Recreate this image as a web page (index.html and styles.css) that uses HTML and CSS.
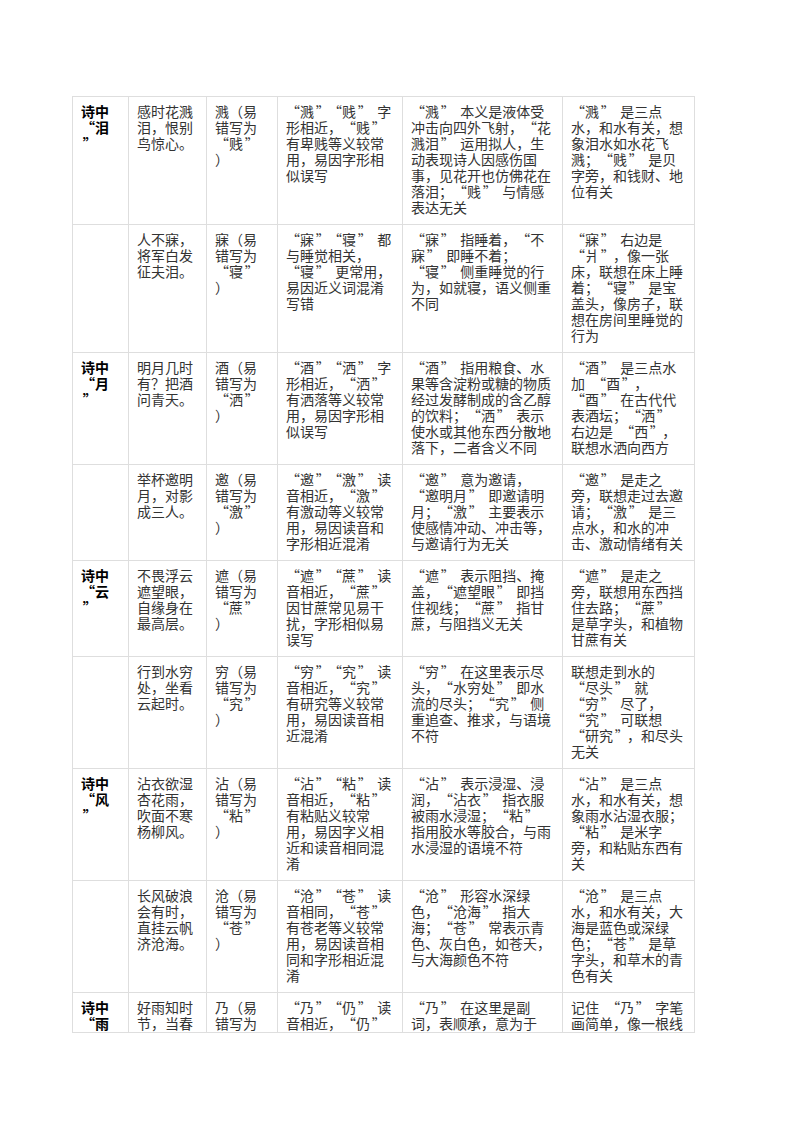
FILE: index.html
```html
<!DOCTYPE html>
<html lang="zh-CN">
<head>
<meta charset="utf-8">
<title>诗词易错字</title>
<link rel="stylesheet" href="styles.css">
</head>
<body>
<div class="page">
<table class="tbl">
<colgroup>
<col class="c1"><col class="c2"><col class="c3"><col class="c4"><col class="c5"><col class="c6">
</colgroup>
<tbody>
<tr>
<td class="key">诗中<br><i class="l">“</i>泪<br><i class="r">”</i></td>
<td>感时花溅<br>泪，恨别<br>鸟惊心。</td>
<td>溅（易<br>错写为<br><i class="l">“</i>贱<i class="r">”</i><br>）</td>
<td><i class="l">“</i>溅<i class="r">”</i><i class="l">“</i>贱<i class="r">”</i> 字<br>形相近，<i class="l">“</i>贱<i class="r">”</i><br>有卑贱等义较常<br>用，易因字形相<br>似误写</td>
<td><i class="l">“</i>溅<i class="r">”</i> 本义是液体受<br>冲击向四外飞射，<i class="l">“</i>花<br>溅泪<i class="r">”</i> 运用拟人，生<br>动表现诗人因感伤国<br>事，见花开也仿佛花在<br>落泪；<i class="l">“</i>贱<i class="r">”</i> 与情感<br>表达无关</td>
<td><i class="l">“</i>溅<i class="r">”</i> 是三点<br>水，和水有关，想<br>象泪水如水花飞<br>溅；<i class="l">“</i>贱<i class="r">”</i> 是贝<br>字旁，和钱财、地<br>位有关</td>
</tr>
<tr>
<td class="key"></td>
<td>人不寐，<br>将军白发<br>征夫泪。</td>
<td>寐（易<br>错写为<br><i class="l">“</i>寝<i class="r">”</i><br>）</td>
<td><i class="l">“</i>寐<i class="r">”</i><i class="l">“</i>寝<i class="r">”</i> 都<br>与睡觉相关，<br><i class="l">“</i>寝<i class="r">”</i> 更常用，<br>易因近义词混淆<br>写错</td>
<td><i class="l">“</i>寐<i class="r">”</i> 指睡着，<i class="l">“</i>不<br>寐<i class="r">”</i> 即睡不着；<br><i class="l">“</i>寝<i class="r">”</i> 侧重睡觉的行<br>为，如就寝，语义侧重<br>不同</td>
<td><i class="l">“</i>寐<i class="r">”</i> 右边是<br><i class="l">“</i>爿<i class="r">”</i>，像一张<br>床，联想在床上睡<br>着；<i class="l">“</i>寝<i class="r">”</i> 是宝<br>盖头，像房子，联<br>想在房间里睡觉的<br>行为</td>
</tr>
<tr>
<td class="key">诗中<br><i class="l">“</i>月<br><i class="r">”</i></td>
<td>明月几时<br>有？把酒<br>问青天。</td>
<td>酒（易<br>错写为<br><i class="l">“</i>洒<i class="r">”</i><br>）</td>
<td><i class="l">“</i>酒<i class="r">”</i><i class="l">“</i>洒<i class="r">”</i> 字<br>形相近，<i class="l">“</i>洒<i class="r">”</i><br>有洒落等义较常<br>用，易因字形相<br>似误写</td>
<td><i class="l">“</i>酒<i class="r">”</i> 指用粮食、水<br>果等含淀粉或糖的物质<br>经过发酵制成的含乙醇<br>的饮料；<i class="l">“</i>洒<i class="r">”</i> 表示<br>使水或其他东西分散地<br>落下，二者含义不同</td>
<td><i class="l">“</i>酒<i class="r">”</i> 是三点水<br>加 <i class="l">“</i>酉<i class="r">”</i>，<br><i class="l">“</i>酉<i class="r">”</i> 在古代代<br>表酒坛；<i class="l">“</i>洒<i class="r">”</i><br>右边是 <i class="l">“</i>西<i class="r">”</i>，<br>联想水洒向西方</td>
</tr>
<tr>
<td class="key"></td>
<td>举杯邀明<br>月，对影<br>成三人。</td>
<td>邀（易<br>错写为<br><i class="l">“</i>激<i class="r">”</i><br>）</td>
<td><i class="l">“</i>邀<i class="r">”</i><i class="l">“</i>激<i class="r">”</i> 读<br>音相近，<i class="l">“</i>激<i class="r">”</i><br>有激动等义较常<br>用，易因读音和<br>字形相近混淆</td>
<td><i class="l">“</i>邀<i class="r">”</i> 意为邀请，<br><i class="l">“</i>邀明月<i class="r">”</i> 即邀请明<br>月；<i class="l">“</i>激<i class="r">”</i> 主要表示<br>使感情冲动、冲击等，<br>与邀请行为无关</td>
<td><i class="l">“</i>邀<i class="r">”</i> 是走之<br>旁，联想走过去邀<br>请；<i class="l">“</i>激<i class="r">”</i> 是三<br>点水，和水的冲<br>击、激动情绪有关</td>
</tr>
<tr>
<td class="key">诗中<br><i class="l">“</i>云<br><i class="r">”</i></td>
<td>不畏浮云<br>遮望眼，<br>自缘身在<br>最高层。</td>
<td>遮（易<br>错写为<br><i class="l">“</i>蔗<i class="r">”</i><br>）</td>
<td><i class="l">“</i>遮<i class="r">”</i><i class="l">“</i>蔗<i class="r">”</i> 读<br>音相近，<i class="l">“</i>蔗<i class="r">”</i><br>因甘蔗常见易干<br>扰，字形相似易<br>误写</td>
<td><i class="l">“</i>遮<i class="r">”</i> 表示阻挡、掩<br>盖，<i class="l">“</i>遮望眼<i class="r">”</i> 即挡<br>住视线；<i class="l">“</i>蔗<i class="r">”</i> 指甘<br>蔗，与阻挡义无关</td>
<td><i class="l">“</i>遮<i class="r">”</i> 是走之<br>旁，联想用东西挡<br>住去路；<i class="l">“</i>蔗<i class="r">”</i><br>是草字头，和植物<br>甘蔗有关</td>
</tr>
<tr>
<td class="key"></td>
<td>行到水穷<br>处，坐看<br>云起时。</td>
<td>穷（易<br>错写为<br><i class="l">“</i>究<i class="r">”</i><br>）</td>
<td><i class="l">“</i>穷<i class="r">”</i><i class="l">“</i>究<i class="r">”</i> 读<br>音相近，<i class="l">“</i>究<i class="r">”</i><br>有研究等义较常<br>用，易因读音相<br>近混淆</td>
<td><i class="l">“</i>穷<i class="r">”</i> 在这里表示尽<br>头，<i class="l">“</i>水穷处<i class="r">”</i> 即水<br>流的尽头；<i class="l">“</i>究<i class="r">”</i> 侧<br>重追查、推求，与语境<br>不符</td>
<td>联想走到水的<br><i class="l">“</i>尽头<i class="r">”</i> 就<br><i class="l">“</i>穷<i class="r">”</i> 尽了，<br><i class="l">“</i>究<i class="r">”</i> 可联想<br><i class="l">“</i>研究<i class="r">”</i>，和尽头<br>无关</td>
</tr>
<tr>
<td class="key">诗中<br><i class="l">“</i>风<br><i class="r">”</i></td>
<td>沾衣欲湿<br>杏花雨，<br>吹面不寒<br>杨柳风。</td>
<td>沾（易<br>错写为<br><i class="l">“</i>粘<i class="r">”</i><br>）</td>
<td><i class="l">“</i>沾<i class="r">”</i><i class="l">“</i>粘<i class="r">”</i> 读<br>音相近，<i class="l">“</i>粘<i class="r">”</i><br>有粘贴义较常<br>用，易因字义相<br>近和读音相同混<br>淆</td>
<td><i class="l">“</i>沾<i class="r">”</i> 表示浸湿、浸<br>润，<i class="l">“</i>沾衣<i class="r">”</i> 指衣服<br>被雨水浸湿；<i class="l">“</i>粘<i class="r">”</i><br>指用胶水等胶合，与雨<br>水浸湿的语境不符</td>
<td><i class="l">“</i>沾<i class="r">”</i> 是三点<br>水，和水有关，想<br>象雨水沾湿衣服；<br><i class="l">“</i>粘<i class="r">”</i> 是米字<br>旁，和粘贴东西有<br>关</td>
</tr>
<tr>
<td class="key"></td>
<td>长风破浪<br>会有时，<br>直挂云帆<br>济沧海。</td>
<td>沧（易<br>错写为<br><i class="l">“</i>苍<i class="r">”</i><br>）</td>
<td><i class="l">“</i>沧<i class="r">”</i><i class="l">“</i>苍<i class="r">”</i> 读<br>音相同，<i class="l">“</i>苍<i class="r">”</i><br>有苍老等义较常<br>用，易因读音相<br>同和字形相近混<br>淆</td>
<td><i class="l">“</i>沧<i class="r">”</i> 形容水深绿<br>色，<i class="l">“</i>沧海<i class="r">”</i> 指大<br>海；<i class="l">“</i>苍<i class="r">”</i> 常表示青<br>色、灰白色，如苍天，<br>与大海颜色不符</td>
<td><i class="l">“</i>沧<i class="r">”</i> 是三点<br>水，和水有关，大<br>海是蓝色或深绿<br>色；<i class="l">“</i>苍<i class="r">”</i> 是草<br>字头，和草木的青<br>色有关</td>
</tr>
<tr class="cut">
<td class="key">诗中<br><i class="l">“</i>雨</td>
<td>好雨知时<br>节，当春</td>
<td>乃（易<br>错写为</td>
<td><i class="l">“</i>乃<i class="r">”</i><i class="l">“</i>仍<i class="r">”</i> 读<br>音相近，<i class="l">“</i>仍<i class="r">”</i></td>
<td><i class="l">“</i>乃<i class="r">”</i> 在这里是副<br>词，表顺承，意为于</td>
<td>记住 <i class="l">“</i>乃<i class="r">”</i> 字笔<br>画简单，像一根线</td>
</tr>
</tbody>
</table>
</div>
</body>
</html>
```

FILE: styles.css
```css
html, body {
  margin: 0;
  padding: 0;
  background: #ffffff;
}

.page {
  padding: 96px 0 0 72px;
}

.tbl {
  border-collapse: collapse;
  table-layout: fixed;
  width: 622px;
  font-family: "Noto Sans CJK SC", "Noto Sans", sans-serif;
  font-size: 14px;
  line-height: 16px;
  color: #333333;
}

.c1 { width: 56px; }
.c2 { width: 78px; }
.c3 { width: 71px; }
.c4 { width: 125px; }
.c5 { width: 160px; }
.c6 { width: 132px; }

.tbl td {
  border: 1px solid #dedede;
  padding: 6px 0 9px 8px;
  vertical-align: top;
  text-align: left;
  white-space: nowrap;
  word-spacing: 4px;
}

.tbl td.key {
  font-weight: 700;
  color: #000000;
}

.tbl tr.cut td {
  padding-bottom: 1px;
}

/* full-width CJK quotation marks */
.l,
.r {
  display: inline-block;
  box-sizing: border-box;
  width: 1em;
  font-style: normal;
  word-spacing: 0;
}

.l {
  text-align: right;
  padding-right: 0.12em;
}

.r {
  text-align: left;
  padding-left: 0.12em;
}
```
